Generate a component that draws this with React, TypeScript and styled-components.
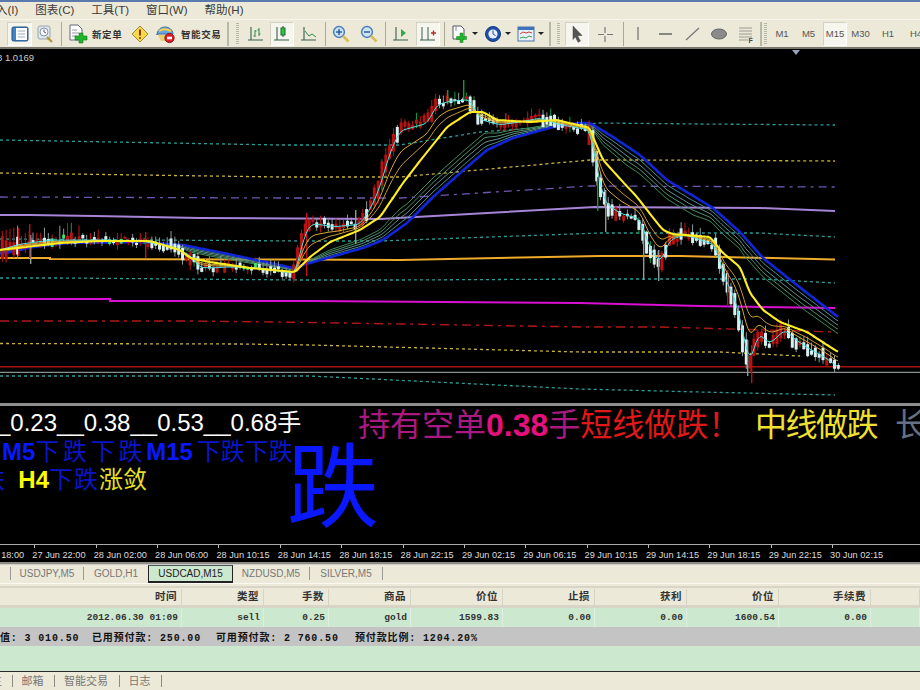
import React from "react";
import styled, { createGlobalStyle } from "styled-components";

const Global = createGlobalStyle`
  html, body { margin: 0; padding: 0; background: #ece9d8; overflow: hidden; }
  #root { width: 920px; height: 690px; }
`;
const CJK = `"Liberation Sans", "Noto Sans CJK SC", sans-serif`;
const MONO = `"Liberation Mono", "Noto Sans CJK SC", monospace`;

const Screen = styled.div`
  width: 920px; height: 690px; display: flex; flex-direction: column; overflow: hidden;
  background: #ece9d8; font-family: ${CJK};
`;
const TopLine = styled.div`height: 2px; background: #5a7aae; flex: none;`;
const MenuBar = styled.div`
  height: 18px; flex: none; display: flex; align-items: flex-start; gap: 17px; padding-left: 0; padding-top: 1px;
  margin-left: -4px; font-size: 11.5px; color: #3a3a3a; border-bottom: 1px solid #f8f6ec; box-sizing: border-box;
`;
const MenuItem = styled.span`white-space: nowrap; line-height: 14px;`;
const Toolbar = styled.div`
  height: 27px; flex: none; display: flex; align-items: center; padding-left: 7px; overflow: hidden;
  border-bottom: 2px solid #77776c; box-sizing: content-box;
`;
const Btn = styled.div<{ $w: number; $active?: boolean }>`
  width: ${(p) => p.$w}px; height: 24px; flex: none; display: flex; align-items: center; justify-content: center;
  box-sizing: border-box; font-size: 9.5px; color: #555;
  ${(p) => (p.$active ? "background:#f6f5ee;border:1px solid #d4d2c4;border-right-color:#fff;border-bottom-color:#fff;" : "")}
`;
const ToolLabel = styled.div<{ $w: number; $pl?: number }>`
  width: ${(p) => p.$w}px; padding-left: ${(p) => p.$pl ?? 0}px; box-sizing: border-box; flex: none;
  font-size: 9.5px; letter-spacing: .6px; color: #333; white-space: nowrap; font-weight: 700;
`;
const Sep = styled.div<{ $w: number; $thick?: boolean }>`
  width: ${(p) => p.$w}px; height: 24px; flex: none; display: flex; justify-content: center;
  &::after { content: ""; width: ${(p) => (p.$thick ? 2 : 1)}px; background: ${(p) => (p.$thick ? "#b5bba8" : "#aca899")}; }
`;
const Grip = styled.div<{ $w: number }>`
  width: ${(p) => p.$w}px; height: 22px; flex: none; display: flex; justify-content: center;
  &::after { content: ""; width: 3px; background: repeating-linear-gradient(#b8b8a8 0 1px, #ece9d8 1px 2px); }
`;
const Spacer = styled.div<{ $w: number }>`width: ${(p) => p.$w}px; flex: none;`;

const ChartArea = styled.div`
  height: 354px; flex: none; background: #000; position: relative; overflow: hidden; display: block;
  svg { display: block; }
`;
const PriceTag = styled.span`
  position: absolute; left: -3px; top: 3px; color: #ccc; font: 9.5px "Liberation Sans", sans-serif; white-space: nowrap;
`;
const Marker = styled.span`
  position: absolute; left: 792px; top: 1px; width: 0; height: 0;
  border-left: 4px solid transparent; border-right: 4px solid transparent; border-top: 5px solid #8fa3bc;
`;
const Divider = styled.div`height: 3px; flex: none; background: #8e8e8e;`;
const TextPanel = styled.div`
  height: 138px; flex: none; background: #000; position: relative; overflow: hidden;
`;
const Label = styled.div<{ $x: number; $y: number; $size: number }>`
  position: absolute; left: ${(p) => p.$x}px; top: ${(p) => p.$y}px; font-size: ${(p) => p.$size}px;
  line-height: ${(p) => p.$size + 2}px; white-space: nowrap; font-family: ${CJK};
`;
const Tx = styled.span<{ $c: string; $b?: boolean; $ls?: number; $ml?: number }>`
  color: ${(p) => p.$c}; font-weight: ${(p) => (p.$b ? 700 : 400)}; letter-spacing: ${(p) => p.$ls ?? 0}px;
  margin-left: ${(p) => p.$ml ?? 0}px;
`;
const Axis = styled.div`
  height: 17px; flex: none; background: #000; border-top: 1px solid #aaa; box-sizing: content-box;
  display: flex; overflow: hidden; color: #ddd; font: 9.2px "Liberation Sans", sans-serif;
`;
const Tick = styled.div<{ $first?: boolean }>`
  width: 61.37px; flex: none; position: relative; padding-top: 4px; line-height: 12px; white-space: nowrap;
  margin-left: ${(p) => (p.$first ? "-29px" : "0")};
  &::before { content: ""; position: absolute; left: 2px; top: 0; width: 1px; height: 3px; background: #bbb; }
`;
const BottomRule = styled.div`height: 2px; flex: none; background: #8c8c84; border-bottom: 1px solid #ccc;`;
const TabBar = styled.div`
  height: 18px; flex: none; display: flex; padding-left: 10px; font: 10px "Liberation Sans", sans-serif; color: #777;
`;
const Tab = styled.div<{ $w: number; $active?: boolean }>`
  width: ${(p) => p.$w}px; flex: none; box-sizing: border-box; text-align: center; line-height: 16px; white-space: nowrap;
  ${(p) =>
    p.$active
      ? "background:#cce8cf;color:#222;border:1px solid #222;border-top:1px solid #555;border-bottom-width:2px;border-left-width:1px;"
      : "height:14px;margin-top:1px;"}
`;
const TabEdge = styled.div`width: 1px; height: 13px; margin-top: 2px; background: #999; flex: none;`;
const TableGap = styled.div`
  height: 5px; flex: none; background: #ece9d8; border-top: 1px solid #fbfaf2; border-bottom: 2px solid #d8d5c6; box-sizing: border-box;
`;
const cols = "182px 82px 65px 82px 92px 92px 92px 92px 92px 49px";
const HeaderRow = styled.div`
  display: grid; grid-template-columns: ${cols}; height: 16px; flex: none; font-size: 10.5px; color: #333; margin-top: 1px;
`;
const HCell = styled.div`
  text-align: right; padding-right: 4px; box-sizing: border-box; border-right: 1px solid #d6d3c4; line-height: 15px; font-weight: 700;
  letter-spacing: .5px;
`;
const HeadShade = styled.div`height: 3px; flex: none; background: #d8d5c6;`;
const DataRow = styled.div`
  display: grid; grid-template-columns: ${cols}; height: 19px; flex: none; background: #cce8cf;
  font: 9.5px ${MONO}; color: #333; font-weight: 700;
`;
const DCell = styled.div`
  text-align: right; padding-right: 3px; box-sizing: border-box; border-right: 1px solid #dfeee0; line-height: 19px;
  white-space: nowrap; overflow: hidden;
`;
const SummaryRow = styled.div`
  height: 19px; flex: none; background: #c4c4c4; display: flex; align-items: center; font: 700 10px ${MONO}; color: #111;
  white-space: nowrap; letter-spacing: .85px; overflow: hidden;
`;
const SumItem = styled.span<{ $w: number }>`width: ${(p) => p.$w}px; flex: none;`;
const GreenFill = styled.div`height: 25px; flex: none; background: #cce8cf; border-bottom: 1px solid #2a2a2a; box-sizing: content-box;`;
const StatusBar = styled.div`
  flex: 1; display: flex; padding-left: 0; font-size: 11px; color: #777; align-items: flex-start; padding-top: 3px;
`;
const StatusTab = styled.div<{ $w: number; $indent?: number }>`
  width: ${(p) => p.$w}px; flex: none; box-sizing: border-box; height: 12px; line-height: 12px; text-align: ${(p) => (p.$indent ? "left" : "center")};
  text-indent: ${(p) => p.$indent ?? 0}px; padding-right: 2px;
  border-right: 1px solid #8a8a80; white-space: nowrap; overflow: hidden;
`;

/* ---------- chart ---------- */
type P = [number, number];
const interp = (pts: P[], x: number) => {
  if (x <= pts[0][0]) return pts[0][1];
  for (let i = 1; i < pts.length; i++) {
    if (x <= pts[i][0]) {
      const [a, b] = pts[i - 1];
      const [c, d] = pts[i];
      return b + ((d - b) * (x - a)) / (c - a);
    }
  }
  return pts[pts.length - 1][1];
};
const yellowPts: P[] = [[0,250],[60,243],[100,241],[150,241],[180,250],[190,258],[210,262],[250,268],[295,272],[310,257],[330,242],[360,230],[380,217],[403,183],[423,157],[447,127],[470,112],[483,112],[497,120],[530,122],[557,120],[590,128],[593,137],[603,160],[623,182],[637,197],[647,210],[663,230],[672,234],[710,237],[723,253],[740,267],[750,293],[763,310],[780,322],[807,332],[838,352]];
const bluePts: P[] = [[0,254],[10,252],[33,247],[67,243],[133,242],[183,245],[233,255],[293,268],[320,260],[363,248],[383,240],[407,223],[433,197],[467,167],[487,150],[513,138],[553,127],[580,123],[590,123],[613,137],[640,155],[667,180],[713,208],[740,232],[763,258],[793,282],[838,317]];
const pricePts: P[] = [[0,250],[20,244],[50,240],[70,240],[100,240],[140,241],[170,246],[190,255],[200,268],[215,268],[230,267],[260,268],[295,274],[305,232],[312,222],[335,226],[360,224],[372,205],[380,185],[390,150],[400,128],[413,125],[427,122],[437,103],[450,100],[470,99],[480,120],[500,125],[520,122],[540,118],[560,125],[590,130],[597,170],[605,205],[620,215],[640,220],[650,250],[660,265],[670,240],[685,235],[700,240],[715,245],[725,280],[735,300],[745,345],[750,368],[758,335],[770,345],[785,330],[795,340],[810,350],[825,358],[838,368]];
const smooth = (pts: P[], w: number) => (x: number) => {
  let s = 0, n = 0;
  for (let d = -w; d <= w; d += 1) { s += interp(pts, Math.min(838, Math.max(0, x + d))); n++; }
  return s / n;
};
const yel = smooth(yellowPts, 2), blu = smooth(bluePts, 2), pri = smooth(pricePts, 1), fast = smooth(pricePts, 4);
const xs: number[] = [];
for (let x = 0; x <= 838; x += 2) xs.push(x);
const pathOf = (f: (x: number) => number) => xs.map((x) => `${x},${f(x).toFixed(1)}`).join(" ");
const Y0 = 49;

const levels: { pts: P[]; c: string; w: number; d?: string }[] = [
  { pts: [[0,140],[280,145],[400,145],[480,132],[600,123],[700,124],[835,125]], c: "#2a9d98", w: 1.3, d: "3 3" },
  { pts: [[0,173],[280,177],[400,177],[590,160],[640,160],[835,161]], c: "#c9b13a", w: 1.3, d: "3 3" },
  { pts: [[0,197],[280,198],[400,198],[590,186],[835,187]], c: "#7156b0", w: 1.3, d: "8 5 3 5" },
  { pts: [[0,215],[30,215],[95,216],[200,218],[380,219],[595,207],[760,208],[835,211]], c: "#a684d8", w: 2 },
  { pts: [[0,239],[300,241],[380,241],[600,233],[760,233],[835,237]], c: "#2a9d98", w: 1.3, d: "3 3" },
  { pts: [[0,258],[50,258],[50,259],[300,259.5],[400,260],[600,256],[680,256],[835,259.5]], c: "#f0ab2a", w: 2 },
  { pts: [[0,278],[60,278],[300,280],[400,280],[600,279],[760,279],[835,283]], c: "#2a9d98", w: 1.3, d: "3 3" },
  { pts: [[0,299],[110,299],[110,301],[310,301],[580,303],[700,306],[835,308]], c: "#d80fd0", w: 2 },
  { pts: [[0,321],[190,321],[310,322.5],[585,327],[660,327],[835,332]], c: "#b01818", w: 1.4, d: "9 5 3 5" },
  { pts: [[0,343.5],[240,344],[310,345],[580,352],[720,352],[800,356]], c: "#c9b13a", w: 1.3, d: "3 3" },
  { pts: [[0,376],[310,376],[580,389],[700,392],[835,395]], c: "#2a9d98", w: 1.3, d: "3 3" },
];
const ribbons = [
  { t: 0.12, cap: 5, c: "#4a8c8c" },
  { t: 0.24, cap: 10, c: "#5f8f8a" },
  { t: 0.36, cap: 14.5, c: "#4f8f6a" },
  { t: 0.48, cap: 19, c: "#3f8a5a" },
];
const rib = (t: number, cap: number) => (x: number) => {
  const d = (yel(x) - blu(x)) * t;
  return blu(x) + Math.max(-cap, Math.min(cap, d));
};
const mixed = (t: number) => (x: number) => yel(x) + (fast(x) - yel(x)) * t;

let seed = 7;
const rnd = () => { seed = (seed * 16807) % 2147483647; return (seed - 1) / 2147483646; };
type Bar = { x: number; top: number; h: number; hi: number; lo: number; body: string; wick: string };
const bars: Bar[] = [];
for (let i = 0; i * 3.835 < 838; i++) {
  const x = i * 3.835 + 0.8;
  const a = pri(x), b = pri(x + 3.835);
  const slope = b - a;
  const up = slope < -0.4 ? rnd() < 0.85 : slope > 0.4 ? rnd() < 0.18 : rnd() < 0.5;
  const busy = x < 80 ? 2.2 : 1;
  const sz = Math.abs(slope) + 1.5 + rnd() * (Math.abs(slope) > 1 ? 10 : 4) * busy;
  const jitter = (rnd() - 0.5) * 7;
  const c = (a + b) / 2 + jitter;
  const wk = (1 + rnd() * 7) * busy;
  const green = rnd() < 0.05;
  const flatLime = Math.abs(slope) < 0.5 && x < 300 && rnd() < 0.12;
  bars.push({
    x, top: c - sz / 2, h: sz, hi: c - sz / 2 - wk, lo: c + sz / 2 + rnd() * 5,
    body: flatLime ? "#44e06a" : up ? "#b81212" : "#d9f0f2",
    wick: green ? "#0f9b3c" : up ? "#c01414" : "#8f9a9c",
  });
}
const spikes: { x: number; a: number; b: number; c: string }[] = [
  { x: 463, a: 80, b: 100, c: "#0f9b3c" }, { x: 447, a: 90, b: 104, c: "#0f9b3c" },
  { x: 597, a: 177, b: 211, c: "#0f9b3c" }, { x: 605, a: 190, b: 232, c: "#8f9a9c" },
  { x: 643, a: 230, b: 280, c: "#8f9a9c" }, { x: 658, a: 250, b: 281, c: "#8f9a9c" },
  { x: 751, a: 345, b: 383, c: "#b81212" }, { x: 747, a: 340, b: 376, c: "#8f9a9c" },
  { x: 727, a: 270, b: 305, c: "#b81212" }, { x: 30, a: 235, b: 264, c: "#8f9a9c" },
  { x: 145, a: 232, b: 258, c: "#c01414" }, { x: 355, a: 210, b: 244, c: "#8f9a9c" },
  { x: 306, a: 213, b: 276, c: "#c01414" }, { x: 505, a: 113, b: 127, c: "#c01414" },
  { x: 29, a: 224, b: 258, c: "#c01414" }, { x: 18, a: 228, b: 256, c: "#c01414" },
];

const Chart = () => (
  <svg width="920" height="354" viewBox="0 0 920 354">
    <g transform={`translate(0 ${-Y0})`}>
      {levels.map((l, i) => (
        <polyline key={i} points={l.pts.map(([x, y]) => `${x},${y}`).join(" ")} fill="none" stroke={l.c} strokeWidth={l.w} strokeDasharray={l.d} />
      ))}
      <line x1="0" x2="920" y1="366.7" y2="366.7" stroke="#a81212" strokeWidth="1.5" />
      <line x1="0" x2="920" y1="372.3" y2="372.3" stroke="#8a8f90" strokeWidth="1.3" />
      {ribbons.map((r) => (
        <polyline key={r.t} points={pathOf(rib(r.t, r.cap))} fill="none" stroke={r.c} strokeWidth="1" />
      ))}
      <polyline points={pathOf(blu)} fill="none" stroke="#1026d8" strokeWidth="2.6" />
      {bars.map((b, i) => (
        <g key={i}>
          <rect x={b.x + 1} y={b.hi} width="1" height={b.lo - b.hi} fill={b.wick} />
          <rect x={b.x} y={b.top} width="3" height={b.h} fill={b.body} />
        </g>
      ))}
      {spikes.map((s, i) => (
        <rect key={i} x={s.x} y={s.a} width="1.4" height={s.b - s.a} fill={s.c} />
      ))}
      <polyline points={pathOf(mixed(0.35))} fill="none" stroke="#c8962a" strokeWidth="1" />
      <polyline points={pathOf(mixed(0.6))} fill="none" stroke="#d8a830" strokeWidth="1" />
      <polyline points={pathOf(mixed(0.95))} fill="none" stroke="#52e0e0" strokeWidth="1" />
      <polyline points={pathOf(yel)} fill="none" stroke="#ffee22" strokeWidth="2.1" />
    </g>
  </svg>
);

/* ---------- icons ---------- */
const Ic = ({ w = 18, h = 18, children }: { w?: number; h?: number; children: React.ReactNode }) => (
  <svg width={w} height={h} viewBox={`0 0 ${w} ${h}`}>{children}</svg>
);
const Book = () => (
  <Ic>
    <rect x="1" y="2" width="16" height="14" rx="1.5" fill="#3f86c8" stroke="#23507e" />
    <rect x="5" y="3" width="11" height="12" fill="#fff" />
    <path d="M7 6h7M7 9h7M7 12h7" stroke="#9ab" />
  </Ic>
);
const ClockMag = () => (
  <Ic>
    <rect x="2" y="1" width="12" height="13" rx="2" fill="#dfe6ee" stroke="#9aa6b5" />
    <circle cx="8" cy="7" r="4" fill="#fff" stroke="#7f93ab" />
    <path d="M8 4.5V7l2 1" stroke="#557" fill="none" />
    <path d="M11 12l5 5" stroke="#b59a3a" strokeWidth="2.4" />
  </Ic>
);
const NewOrder = () => (
  <Ic w={20} h={20}>
    <path d="M2 1h8l4 4v11H2z" fill="#fff" stroke="#667" />
    <path d="M4 6h5M4 9h7M4 12h5" stroke="#99a" />
    <path d="M11 9h4v3h4v4h-4v3h-4v-3H7v-4h4z" fill="#22b32c" stroke="#16791c" strokeWidth=".6" />
  </Ic>
);
const Warn = () => (
  <Ic>
    <path d="M9 1l8 8-8 8-8-8z" fill="#fbd84a" stroke="#9a8a3c" />
    <path d="M9 4.5v6" stroke="#8a3d10" strokeWidth="2" />
    <circle cx="9" cy="13" r="1.1" fill="#8a3d10" />
  </Ic>
);
const Robot = () => (
  <Ic w={20} h={20}>
    <path d="M1 11c0-5 4-8 8-8s8 3 8 7H1z" fill="#6ba6e0" stroke="#3c6ca0" />
    <path d="M3 7c3-2 8-2 12 0" stroke="#f4d24a" strokeWidth="2" fill="none" />
    <path d="M2 11h14l-2 6H5z" fill="#e8cf70" />
    <circle cx="13.5" cy="14" r="4.6" fill="#d8202a" stroke="#8c1218" />
    <rect x="11" y="12.7" width="5" height="2.6" fill="#fff" />
  </Ic>
);
const AxisFrame = () => <path d="M4 2v13M1 15h15" stroke="#39604e" strokeWidth="1.1" fill="none" />;
const Bars = () => (
  <Ic><AxisFrame /><path d="M8 5v7M6.5 11H8M8 6h1.5M12 3v8M10.5 5H12M12 9h1.5" stroke="#2a8a4c" fill="none" /></Ic>
);
const Candle = () => (
  <Ic><AxisFrame /><path d="M10 1v11" stroke="#333" /><rect x="8" y="3" width="4" height="7" fill="#2fc24a" stroke="#1c6d2f" /></Ic>
);
const LineCh = () => (
  <Ic><AxisFrame /><path d="M5 6l4 5 3-2 4 3" stroke="#2a8a4c" fill="none" /></Ic>
);
const Zoom = ({ plus }: { plus?: boolean }) => (
  <Ic>
    <circle cx="7" cy="7" r="5.4" fill="#cfe3f6" stroke="#4a7db8" strokeWidth="1.5" />
    <path d={plus ? "M4 7h6M7 4v6" : "M4 7h6"} stroke="#2c5f9e" strokeWidth="1.5" />
    <path d="M11 11l5.5 5.5" stroke="#d8c050" strokeWidth="2.6" />
  </Ic>
);
const Shift = () => (
  <Ic><AxisFrame /><path d="M9 4v8l5-4z" fill="#2fa84a" /></Ic>
);
const Auto = () => (
  <Ic><path d="M3 2v13M9 2v13M1 15h15" stroke="#39604e" fill="none" /><path d="M12 8h5M14.5 5.5v5" stroke="#b52a2a" strokeWidth="1.4" /></Ic>
);
const Caret = () => (
  <svg width="6" height="4" viewBox="0 0 6 4" style={{ marginLeft: 3 }}><path d="M0 0h6L3 3z" fill="#222" /></svg>
);
const AddDoc = () => (
  <Ic>
    <path d="M2 1h8l3 3v10H2z" fill="#fff" stroke="#556" />
    <path d="M5 1v5" stroke="#888" />
    <path d="M9 8h3v3.500h3.500v3H12v3H9v-3H5.500v-3H9z" fill="#21b52c" stroke="#167c1e" strokeWidth=".5" />
  </Ic>
);
const Clock = () => (
  <Ic>
    <circle cx="9" cy="9" r="7.5" fill="#1e4ea6" stroke="#143a82" />
    <circle cx="9" cy="9" r="4.6" fill="#e6eefb" />
    <path d="M9 5.500V9l2.500 1.500" stroke="#274a8c" fill="none" />
  </Ic>
);
const Template = () => (
  <Ic>
    <rect x="1" y="2" width="16" height="14" fill="#e8f0fa" stroke="#4b75aa" />
    <rect x="1" y="2" width="16" height="3" fill="#3f73c0" />
    <path d="M3 9l3-2 3 1 3-1 3 1" stroke="#c5403a" fill="none" />
    <path d="M3 13l3-1 3 1 3-2 3 1" stroke="#3ca14a" fill="none" />
  </Ic>
);
const Cursor = () => (
  <Ic><path d="M5 1l9 9.500-4.500.2 3 5.300-2.500 1.300-2.700-5.600L5 14.500z" fill="#555" stroke="#444" strokeWidth=".5" /></Ic>
);
const Cross = () => <Ic><path d="M9 2v6M9 11v6M2 9.500h6M11 9.500h6" stroke="#777" strokeWidth="1.200" /></Ic>;
const VLine = () => <Ic><path d="M9 2v13" stroke="#777" strokeWidth="1.300" /></Ic>;
const HLine = () => <Ic><path d="M3 9h13" stroke="#666" strokeWidth="1.500" /></Ic>;
const Trend = () => <Ic><path d="M3 15L16 3" stroke="#777" strokeWidth="1.200" /></Ic>;
const Ell = () => <Ic><ellipse cx="9" cy="9" rx="7.500" ry="5" fill="#8a8a8a" stroke="#666" /></Ic>;
const Fib = () => (
  <Ic>
    <path d="M2 3h13M2 6h13M2 9h13M2 12h13M2 15h9" stroke="#9a9a90" />
    <text x="11.500" y="17.500" fontSize="7" fontWeight="700" fill="#444" fontFamily="Liberation Sans">F</text>
  </Ic>
);

const axisLabels = ["27 Jun 18:00","27 Jun 22:00","28 Jun 02:00","28 Jun 06:00","28 Jun 10:15","28 Jun 14:15","28 Jun 18:15","28 Jun 22:15","29 Jun 02:15","29 Jun 06:15","29 Jun 10:15","29 Jun 14:15","29 Jun 18:15","29 Jun 22:15","30 Jun 02:15"];
const heads = ["时间","类型","手数","商品","价位","止损","获利","价位","手续费",""];
const cells = ["2012.06.30 01:09","sell","0.25","gold","1599.83","0.00","0.00","1600.54","0.00",""];

export default function App() {
  return (
    <Screen>
      <Global />
      <TopLine />
      <MenuBar>
        <MenuItem>入(I)</MenuItem>
        <MenuItem>图表(C)</MenuItem>
        <MenuItem>工具(T)</MenuItem>
        <MenuItem>窗口(W)</MenuItem>
        <MenuItem>帮助(H)</MenuItem>
      </MenuBar>
      <Toolbar>
        <Btn $w={25} $active><Book /></Btn>
        <Btn $w={26}><ClockMag /></Btn>
        <Sep $w={6} />
        <Btn $w={28}><NewOrder /></Btn>
        <ToolLabel $w={34}>新定单</ToolLabel>
        <Btn $w={28}><Warn /></Btn>
        <Btn $w={24}><Robot /></Btn>
        <ToolLabel $w={46} $pl={3}>智能交易</ToolLabel>
        <Sep $w={7} $thick />
        <Grip $w={12} />
        <Btn $w={26}><Bars /></Btn>
        <Spacer $w={1} />
        <Btn $w={24} $active><Candle /></Btn>
        <Btn $w={30}><LineCh /></Btn>
        <Sep $w={3} />
        <Btn $w={28}><Zoom plus /></Btn>
        <Btn $w={28}><Zoom /></Btn>
        <Sep $w={5} />
        <Btn $w={26}><Shift /></Btn>
        <Spacer $w={2} />
        <Btn $w={24} $active><Auto /></Btn>
        <Sep $w={8} />
        <Btn $w={32}><AddDoc /><Caret /></Btn>
        <Btn $w={34}><Clock /><Caret /></Btn>
        <Btn $w={33}><Template /><Caret /></Btn>
        <Sep $w={5} $thick />
        <Grip $w={13} />
        <Btn $w={24} $active><Cursor /></Btn>
        <Btn $w={32}><Cross /></Btn>
        <Sep $w={4} />
        <Btn $w={26}><VLine /></Btn>
        <Btn $w={28}><HLine /></Btn>
        <Btn $w={26}><Trend /></Btn>
        <Btn $w={28}><Ell /></Btn>
        <Btn $w={26}><Fib /></Btn>
        <Sep $w={3} $thick />
        <Grip $w={7} />
        <Btn $w={26}>M1</Btn>
        <Btn $w={27}>M5</Btn>
        <Spacer $w={1} />
        <Btn $w={24} $active>M15</Btn>
        <Btn $w={27}>M30</Btn>
        <Btn $w={28}>H1</Btn>
        <Btn $w={28}>H4</Btn>
      </Toolbar>
      <ChartArea>
        <Chart />
        <PriceTag>8 1.0169</PriceTag>
        <Marker />
      </ChartArea>
      <Divider />
      <TextPanel>
        <Label $x={-3} $y={4} $size={24}><Tx $c="#fff">_0.23__0.38__0.53__0.68手</Tx></Label>
        <Label $x={2} $y={33} $size={24}>
          <Tx $c="#0a18ff" $b>M5</Tx><Tx $c="#0a16c8" $ls={3.7}>下跌下跌</Tx>
          <Tx $c="#0a18ff" $b>M15</Tx><Tx $c="#0a16c8" $ml={4}>下跌下跌</Tx>
        </Label>
        <Label $x={-19} $y={61} $size={24}>
          <Tx $c="#0a16c8">跌</Tx><Tx $c="#ffff00" $b>&nbsp;&nbsp;H4</Tx><Tx $c="#0a16c8" $ls={1}>下跌</Tx><Tx $c="#e8e020">涨敛</Tx>
        </Label>
        <Label $x={287} $y={35} $size={92}><Tx $c="#0a18ff">跌</Tx></Label>
        <Label $x={358} $y={2} $size={32}>
          <Tx $c="#a81a80">持有空单</Tx><Tx $c="#e4107c" $b>0.38</Tx><Tx $c="#a81a80">手</Tx>
          <Tx $c="#e01818">短线做跌！</Tx><Tx $c="#f0e030" $ls={-1.5}>&nbsp;&nbsp;中线做跌</Tx><Tx $c="#667085">&nbsp;&nbsp;长</Tx>
        </Label>
      </TextPanel>
      <Axis>
        {axisLabels.map((l, i) => (
          <Tick key={l} $first={i === 0}>{l}</Tick>
        ))}
      </Axis>
      <BottomRule />
      <TabBar>
        <TabEdge />
        <Tab $w={72}>USDJPY,M5</Tab>
        <TabEdge />
        <Tab $w={64}>GOLD,H1</Tab>
        <Tab $w={85} $active>USDCAD,M15</Tab>
        <Tab $w={76}>NZDUSD,M5</Tab>
        <TabEdge />
        <Tab $w={72}>SILVER,M5</Tab>
        <TabEdge />
      </TabBar>
      <TableGap />
      <HeaderRow>
        {heads.map((h, i) => (
          <HCell key={i}>{h}</HCell>
        ))}
      </HeaderRow>
      <HeadShade />
      <DataRow>
        {cells.map((c, i) => (
          <DCell key={i}>{c}</DCell>
        ))}
      </DataRow>
      <SummaryRow>
        <SumItem $w={92}>值: 3 010.50</SumItem>
        <SumItem $w={124}>已用预付款: 250.00</SumItem>
        <SumItem $w={139}>可用预付款: 2 760.50</SumItem>
        <SumItem $w={140}>预付款比例: 1204.20%</SumItem>
      </SummaryRow>
      <GreenFill />
      <StatusBar>
        <StatusTab $w={13} $indent={-9}>主</StatusTab>
        <StatusTab $w={42}>邮箱</StatusTab>
        <StatusTab $w={65}>智能交易</StatusTab>
        <StatusTab $w={42}>日志</StatusTab>
      </StatusBar>
    </Screen>
  );
}
